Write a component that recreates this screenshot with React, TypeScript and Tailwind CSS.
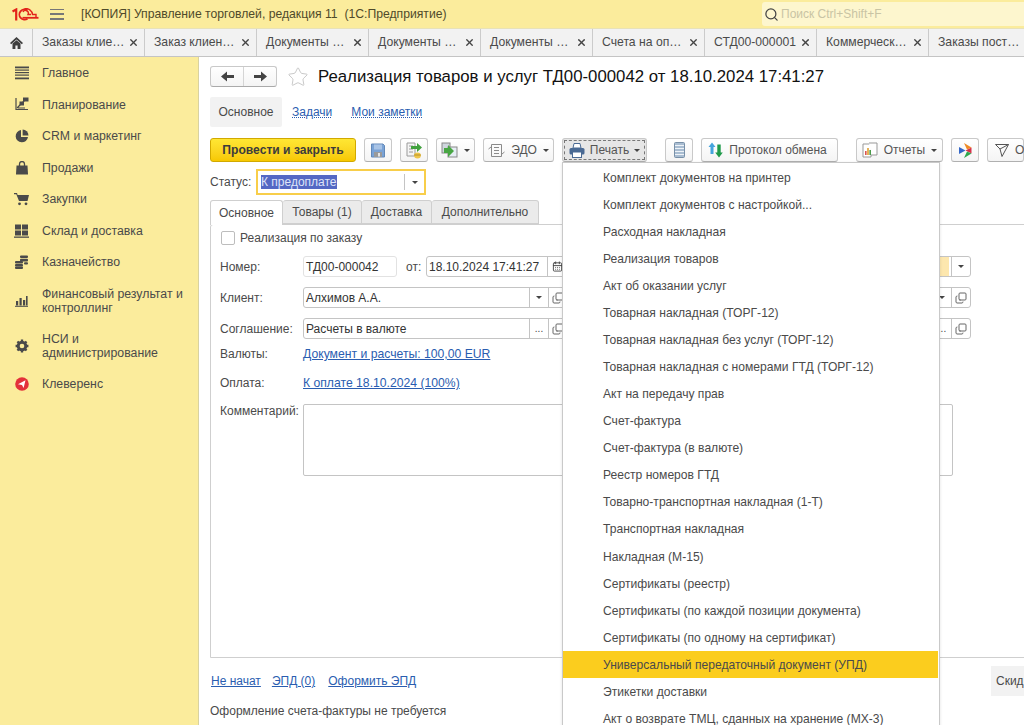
import { X, Search, Star, Copy, CalendarDays } from "lucide-react";
import type { ReactNode } from "react";

const tabs = [
  "Заказы клие…",
  "Заказ клиен…",
  "Документы …",
  "Документы …",
  "Документы …",
  "Счета на оп…",
  "СТД00-000001",
  "Коммерческ…",
  "Заказы пост…",
];

const printItems = [
  "Комплект документов на принтер",
  "Комплект документов с настройкой...",
  "Расходная накладная",
  "Реализация товаров",
  "Акт об оказании услуг",
  "Товарная накладная (ТОРГ-12)",
  "Товарная накладная без услуг (ТОРГ-12)",
  "Товарная накладная с номерами ГТД (ТОРГ-12)",
  "Акт на передачу прав",
  "Счет-фактура",
  "Счет-фактура (в валюте)",
  "Реестр номеров ГТД",
  "Товарно-транспортная накладная (1-Т)",
  "Транспортная накладная",
  "Накладная (М-15)",
  "Сертификаты (реестр)",
  "Сертификаты (по каждой позиции документа)",
  "Сертификаты (по одному на сертификат)",
  "Универсальный передаточный документ (УПД)",
  "Этикетки доставки",
  "Акт о возврате ТМЦ, сданных на хранение (МХ-3)",
];

function Logo() {
  return (
    <svg width="27" height="13" viewBox="0 0 27 13" fill="none" stroke="#e2231a">
      <path d="M0.5 3.5 L4.2 1.5 V12.5" strokeWidth="2.2" />
      <path d="M15.5 2.2 A5.2 5.2 0 1 0 15.5 10.8" strokeWidth="1.8" />
      <path d="M10.5 9.8 H26.5" strokeWidth="1.8" />
      <path d="M11 4 A2.5 2.5 0 0 1 16 6.5 H19 M12.5 0.8 A6.5 6.5 0 0 1 20.5 6.5 H24 V9" strokeWidth="1.4" />
    </svg>
  );
}

function HomeIcon() {
  return (
    <svg width="13" height="12" viewBox="0 0 13 12" fill="#3f3f3f">
      <path d="M6.5 0 L13 6 L11.8 7.2 L6.5 2.4 L1.2 7.2 L0 6 Z" />
      <path d="M2.5 6.6 L6.5 3.2 L10.5 6.6 V12 H7.6 V8.4 H5.4 V12 H2.5 Z" />
    </svg>
  );
}

function NavArrow({ flip }: { flip?: boolean }) {
  return (
    <svg width="13" height="11" viewBox="0 0 13 11" fill="#444" className={flip ? "scale-x-[-1]" : ""}>
      <path d="M0 5.5 L6 0.5 V4 H13 V7 H6 V10.5 Z" />
    </svg>
  );
}

function NavIcon({ name }: { name: string }) {
  const c = "#4a4a4a";
  if (name === "main")
    return (
      <svg width="14" height="14" viewBox="0 0 14 14" fill={c}>
        <rect y="0.5" width="14" height="1.8" />
        <rect y="3.5" width="14" height="1.2" />
        <rect y="6" width="14" height="1.2" />
        <rect y="8.5" width="14" height="1.2" />
        <rect y="11.5" width="14" height="1.8" />
      </svg>
    );
  if (name === "plan")
    return (
      <svg width="15" height="15" viewBox="0 0 15 15" fill="none" stroke={c}>
        <path d="M2 1 V12.5 H14" strokeWidth="1.2" />
        <path d="M3 11 L11 3 M4 11 H11" strokeWidth="1.2" />
        <rect x="9.5" y="1" width="4.5" height="3" fill={c} />
        <rect x="6" y="5" width="3.5" height="3" fill={c} />
      </svg>
    );
  if (name === "crm")
    return (
      <svg width="14" height="14" viewBox="0 0 14 14" fill={c}>
        <path d="M6 1 A6.2 6.2 0 1 0 13 8 H6 Z" />
        <path d="M7.6 0.5 A6 6 0 0 1 13.5 6.4 H7.6 Z" />
      </svg>
    );
  if (name === "sales")
    return (
      <svg width="14" height="14" viewBox="0 0 14 14">
        <path d="M1.5 4.5 H12.5 L13 13.5 H1 Z" fill={c} />
        <path d="M4.5 6 V3 A2.5 2.5 0 0 1 9.5 3 V6" fill="none" stroke={c} strokeWidth="1.3" />
      </svg>
    );
  if (name === "buy")
    return (
      <svg width="15" height="14" viewBox="0 0 15 14" fill={c}>
        <path d="M0 1 H3 L3.6 3 H15 L13.5 9 H5 L2.3 2.2 H0 Z" />
        <circle cx="5.5" cy="11.8" r="1.4" />
        <circle cx="12" cy="11.8" r="1.4" />
      </svg>
    );
  if (name === "stock")
    return (
      <svg width="15" height="14" viewBox="0 0 15 14" fill={c}>
        <rect x="1" y="0.5" width="6" height="5" />
        <rect x="8" y="0.5" width="6" height="5" />
        <rect x="1" y="6.5" width="6" height="5" />
        <rect x="8" y="6.5" width="6" height="5" />
        <rect y="12.5" width="15" height="1.3" />
      </svg>
    );
  if (name === "cash")
    return (
      <svg width="13" height="14" viewBox="0 0 13 14" fill={c}>
        <rect x="5" y="0.5" width="8" height="2.6" rx="1" />
        <rect x="5" y="3.8" width="8" height="2.6" rx="1" />
        <rect x="0" y="6" width="8" height="2.4" rx="1" />
        <rect x="0" y="9" width="8" height="2.4" rx="1" />
        <rect x="0" y="11.6" width="8" height="2.4" rx="1" />
        <rect x="9" y="7.2" width="4" height="2.4" rx="1" />
      </svg>
    );
  if (name === "fin")
    return (
      <svg width="13" height="12" viewBox="0 0 13 12" fill={c}>
        <rect x="1" y="6" width="2.2" height="4.5" />
        <rect x="4.5" y="3" width="2.2" height="7.5" />
        <rect x="8" y="5" width="2.2" height="5.5" />
        <rect x="11" y="1" width="1.6" height="9.5" />
        <rect y="10.8" width="13" height="1" />
      </svg>
    );
  if (name === "nsi")
    return (
      <svg width="14" height="14" viewBox="0 0 24 24" fill="none" stroke={c}>
        <circle cx="12" cy="12" r="6.5" strokeWidth="5" />
        <path
          d="M12 1 V5 M12 19 V23 M1 12 H5 M19 12 H23 M4.2 4.2 L7 7 M17 17 L19.8 19.8 M4.2 19.8 L7 17 M17 7 L19.8 4.2"
          strokeWidth="4"
        />
      </svg>
    );
  return (
    <svg width="14" height="14" viewBox="0 0 14 14">
      <circle cx="7" cy="7" r="6.8" fill="#e3313a" />
      <path d="M3 7.2 L10.5 3.2 L8.6 11 L7 8 Z" fill="#fff" />
    </svg>
  );
}

const sections = [
  { icon: "main", label: "Главное", h: "h-[32px]" },
  { icon: "plan", label: "Планирование", h: "h-[31px]" },
  { icon: "crm", label: "CRM и маркетинг", h: "h-[32px]" },
  { icon: "sales", label: "Продажи", h: "h-[31px]" },
  { icon: "buy", label: "Закупки", h: "h-[32px]" },
  { icon: "stock", label: "Склад и доставка", h: "h-[31px]" },
  { icon: "cash", label: "Казначейство", h: "h-[32px]" },
  { icon: "fin", label: "Финансовый результат и контроллинг", h: "h-[46px]" },
  { icon: "nsi", label: "НСИ и администрирование", h: "h-[44px]" },
  { icon: "klev", label: "Клеверенс", h: "h-[31px]" },
];

function Sidebar() {
  return (
    <aside className="w-[199px] shrink-0 border-r border-[#d9d2a0] bg-[#fbec9c]">
      {sections.map((s) => (
        <div key={s.label} className={`flex items-center ${s.h}`}>
          <span className="flex w-[42px] shrink-0 justify-center pl-[2px] pr-[1px]">
            <NavIcon name={s.icon} />
          </span>
          <span className="w-[150px] text-[12.3px] leading-[14px] text-[#4a4a4a]">{s.label}</span>
        </div>
      ))}
    </aside>
  );
}

function Btn({ w, children, className = "" }: { w: string; children: ReactNode; className?: string }) {
  return (
    <div
      className={`flex h-[24px] shrink-0 items-center justify-center gap-[6px] whitespace-nowrap rounded-[3px] border border-[#c9c9c9] border-b-[#b0b0b0] bg-gradient-to-b from-white to-[#f4f4f4] text-[12px] text-[#555] ${w} ${className}`}
    >
      {children}
    </div>
  );
}

function Caret() {
  return <span className="h-0 w-0 shrink-0 border-x-[3px] border-t-[3px] border-x-transparent border-t-[#444]" />;
}

function DocIcon({ kind }: { kind: string }) {
  if (kind === "save")
    return (
      <svg width="14" height="15" viewBox="0 0 14 15" className="shrink-0">
        <path d="M0.5 1 H12 L13.5 2.5 V14 H0.5 Z" fill="#7aa3d6" stroke="#6288b8" />
        <rect x="3" y="1.5" width="8" height="5" fill="#a9c4e6" />
        <rect x="3" y="9" width="8" height="5" fill="#9a9a9a" />
        <rect x="7" y="10" width="2" height="3.5" fill="#e4e4e4" />
      </svg>
    );
  if (kind === "post")
    return (
      <svg width="17" height="17" viewBox="0 0 17 17" className="shrink-0">
        <path d="M1 1 H9 V14 H1 Z" fill="#f5f5f5" stroke="#9a9a9a" />
        <path d="M3 4 H7 M3 7 H7 M3 10 H7" stroke="#9a9a9a" />
        <path d="M5 4 H11 V1 L16 5.5 L11 10 V7 H5 Z" fill="#41a13e" />
        <ellipse cx="11.5" cy="13.5" rx="3.4" ry="3" fill="#eec64b" />
        <path d="M8.2 13 H14.8" stroke="#b8922a" />
      </svg>
    );
  if (kind === "create")
    return (
      <svg width="17" height="16" viewBox="0 0 17 16" className="shrink-0">
        <rect x="1" y="1" width="8" height="10" fill="#cfd6de" stroke="#888" />
        <rect x="7" y="5" width="9" height="10" fill="#e6edf4" stroke="#888" />
        <path d="M3 6 H7 V3 L13 9 L7 15 V11 H3 Z" fill="#48a643" />
      </svg>
    );
  if (kind === "edo")
    return (
      <svg width="17" height="15" viewBox="0 0 17 15" fill="none" stroke="#8a8a8a" className="shrink-0">
        <path d="M3.5 1.5 H13.5 V13.5 H3.5 Z M6 4.5 H11 M6 7.5 H11 M6 10.5 H11" />
        <path d="M0.5 6 L3 4 M14 11 L16.5 9" />
      </svg>
    );
  if (kind === "print")
    return (
      <svg width="16" height="15" viewBox="0 0 16 15" className="shrink-0">
        <path d="M4 5 L5 0.5 H11 L12 5 Z" fill="#fff" stroke="#4a6a94" />
        <rect x="0.5" y="5" width="15" height="6.5" rx="1.5" fill="#4a6a94" />
        <rect x="3.5" y="9" width="9" height="5.5" fill="#fff" stroke="#4a6a94" />
      </svg>
    );
  if (kind === "list")
    return (
      <svg width="11" height="16" viewBox="0 0 11 16" className="shrink-0">
        <rect x="0.5" y="0.5" width="10" height="15" rx="1" fill="#a9bdd2" stroke="#7890a8" />
        <path d="M1 3.5 H10 M1 6.5 H10 M1 9.5 H10 M1 12.5 H10" stroke="#eef3f8" />
      </svg>
    );
  if (kind === "exchange")
    return (
      <svg width="15" height="16" viewBox="0 0 15 16" className="shrink-0">
        <path d="M4 0.5 L7.5 5 H5.5 V12 H2.5 V5 H0.5 Z" fill="#45a4dd" />
        <path d="M11 15.5 L14.8 10.5 H12.7 V2.5 H9.3 V10.5 H7.2 Z" fill="#1f9a4a" />
      </svg>
    );
  if (kind === "reports")
    return (
      <svg width="16" height="16" viewBox="0 0 16 16" className="shrink-0">
        <path d="M1 2 H9 V15 H1 Z" fill="#fff" stroke="#999" />
        <path d="M7 1 H15 V13 H9" fill="#fff" stroke="#999" />
        <rect x="3" y="9" width="1.6" height="4" fill="#d9534f" />
        <rect x="5.2" y="6" width="1.6" height="7" fill="#e0a030" />
        <rect x="7.4" y="8" width="1.6" height="5" fill="#4a9a4a" />
      </svg>
    );
  if (kind === "play")
    return (
      <svg width="13" height="15" viewBox="0 0 13 15" className="shrink-0">
        <path d="M5 0 L12.5 4.5 L8 6.5 Z" fill="#f08a24" />
        <path d="M0 4 L6.5 7.5 L0 11 Z" fill="#3467c8" />
        <path d="M6.5 7.5 L12.5 4.5 L12.5 10.5 Z" fill="#d6314a" />
        <path d="M5 15 L12.5 10.5 L8 8.5 Z" fill="#2fa84f" />
      </svg>
    );
  return (
    <svg width="14" height="13" viewBox="0 0 14 13" fill="none" stroke="#555" className="shrink-0">
      <path d="M0.5 0.5 H13.5 L7 12.5 L5 5 Z M5 5 L13.5 0.5" />
    </svg>
  );
}

function Toolbar() {
  return (
    <div className="mt-[11px] flex h-[24px] shrink-0">
      <div className="flex h-[24px] w-[146px] shrink-0 items-center justify-center rounded-[3px] border border-[#d1a900] bg-gradient-to-b from-[#ffe733] to-[#f7c800] text-[12.1px] font-bold text-[#3c3c3c]">
        Провести и закрыть
      </div>
      <Btn w="w-[28px] ml-[8px]"><DocIcon kind="save" /></Btn>
      <Btn w="w-[28px] ml-[8px]"><DocIcon kind="post" /></Btn>
      <Btn w="w-[39px] ml-[8px]"><DocIcon kind="create" /><Caret /></Btn>
      <Btn w="w-[71px] ml-[8px]"><DocIcon kind="edo" />ЭДО<Caret /></Btn>
      <Btn w="w-[85px] ml-[8px]" className="border-[#a8a8a8] bg-none bg-[#e6e6e6]">
        <span className="flex h-[20px] w-[81px] items-center justify-center gap-[5px] border border-dashed border-[#777]">
          <DocIcon kind="print" />Печать<Caret />
        </span>
      </Btn>
      <Btn w="w-[28px] ml-[18px]"><DocIcon kind="list" /></Btn>
      <Btn w="w-[137px] ml-[8px]" className="pr-[4px]"><DocIcon kind="exchange" />Протокол обмена</Btn>
      <Btn w="w-[87px] ml-[18px]"><DocIcon kind="reports" />Отчеты<Caret /></Btn>
      <Btn w="w-[28px] ml-[8px]"><DocIcon kind="play" /></Btn>
      <Btn w="w-[37px] ml-[8px]" className="justify-start pl-[7px]"><DocIcon kind="send" />О</Btn>
    </div>
  );
}

function Field({ w, children, right, className = "" }: { w: string; children: ReactNode; right?: ReactNode; className?: string }) {
  return (
    <div className={`flex h-[21px] shrink-0 rounded-[3px] border border-[#c4c4c4] bg-white text-[12px] text-[#333] ${w} ${className}`}>
      <span className="flex min-w-0 flex-1 items-center pl-[2px]">{children}</span>
      {right}
    </div>
  );
}

function Seg({ w = "w-[19px]", children }: { w?: string; children: ReactNode }) {
  return <span className={`flex shrink-0 items-center justify-center border-l border-[#c4c4c4] ${w}`}>{children}</span>;
}

function CopyIcon() {
  return <Copy size={12} color="#666" className="scale-y-[-1]" />;
}

function Row({ label, mt, children }: { label: string; mt: string; children: ReactNode }) {
  return (
    <div className={`flex items-center ${mt}`}>
      <span className="w-[92px] shrink-0 pl-[9px] text-[12px] text-[#4a4a4a]">{label}</span>
      {children}
    </div>
  );
}

function FormPanel() {
  return (
    <div className="flex h-[434px] w-[830px] shrink-0 flex-col rounded-tl-[3px] border border-[#cfcfcf] bg-white">
      <div className="mt-[4px] flex items-center pl-[10px] text-[12px] text-[#4a4a4a]">
        <span className="mr-[5px] h-[14px] w-[14px] rounded-[2px] border border-[#bdbdbd]" />
        Реализация по заказу
      </div>
      <Row label="Номер:" mt="mt-[9px]">
        <Field w="w-[94px]" className="border-[#e2e2e2]">ТД00-000042</Field>
        <span className="ml-[9px] w-[20px] text-[12px] text-[#4a4a4a]">от:</span>
        <Field w="w-[141px]" right={<Seg><CalendarDays size={11} strokeWidth={2} color="#444" /></Seg>}>
          18.10.2024 17:41:27
        </Field>
        <Field w="w-[130px] ml-[274px]" right={<Seg><Caret /></Seg>}>
          <span className="-ml-[2px] h-full w-full rounded-l-[3px] bg-[#fde7ae]" />
        </Field>
      </Row>
      <Row label="Клиент:" mt="mt-[10px]">
        <Field
          w="w-[265px]"
          right={
            <>
              <Seg><Caret /></Seg>
              <Seg><CopyIcon /></Seg>
            </>
          }
        >
          Алхимов А.А.
        </Field>
        <Field
          w="w-[150px] ml-[253px]"
          right={
            <>
              <Seg><Caret /></Seg>
              <Seg><CopyIcon /></Seg>
            </>
          }
        >
          {" "}
        </Field>
      </Row>
      <Row label="Соглашение:" mt="mt-[10px]">
        <Field
          w="w-[265px]"
          right={
            <>
              <Seg><span className="text-[10px] leading-none text-[#444]">...</span></Seg>
              <Seg><CopyIcon /></Seg>
            </>
          }
        >
          Расчеты в валюте
        </Field>
        <Field
          w="w-[150px] ml-[253px]"
          right={
            <>
              <Seg><span className="text-[10px] leading-none text-[#444]">...</span></Seg>
              <Seg><CopyIcon /></Seg>
            </>
          }
        >
          {" "}
        </Field>
      </Row>
      <Row label="Валюты:" mt="mt-[6px]">
        <a className="text-[12.2px] text-[#2a5db0] underline">Документ и расчеты: 100,00 EUR</a>
      </Row>
      <Row label="Оплата:" mt="mt-[11px]">
        <a className="text-[12.2px] text-[#2a5db0] underline">К оплате 18.10.2024 (100%)</a>
      </Row>
      <div className="mt-[11px] flex items-start">
        <span className="w-[92px] shrink-0 pl-[9px] text-[12px] leading-[14px] text-[#4a4a4a]">Комментарий:</span>
        <div className="h-[72px] w-[650px] rounded-[2px] border border-[#c4c4c4]" />
      </div>
    </div>
  );
}

function PrintMenu() {
  return (
    <div className="absolute left-[562px] top-[162px] h-[570px] w-[378px] border border-[#c9c9c9] bg-white pt-[1.4px] shadow-[0_1px_3px_rgba(0,0,0,0.12)]">
      {printItems.map((item) => (
        <div
          key={item}
          className={`flex h-[27.05px] items-center pl-[40px] text-[12.1px] text-[#4a4a4a] ${
            item.startsWith("Универсальный") ? "mr-[1px] bg-[#fbcd1e] text-[#3d3a20]" : ""
          }`}
        >
          {item}
        </div>
      ))}
    </div>
  );
}

export default function App() {
  return (
    <div className="relative flex h-[725px] w-[1024px] flex-col overflow-hidden bg-white font-['Liberation_Sans',Arial,sans-serif]">
      <header className="flex h-[28px] shrink-0 items-center bg-[#fbec9c]">
        <span className="ml-[12px] flex w-[27px]"><Logo /></span>
        <span className="ml-[11px] flex h-[11px] w-[14px] flex-col justify-between">
          <i className="h-[1.5px] bg-[#777]" />
          <i className="h-[1.5px] bg-[#777]" />
          <i className="h-[1.5px] bg-[#777]" />
        </span>
        <span className="ml-[17px] text-[12.2px] text-[#4f4a2a]">[КОПИЯ] Управление торговлей, редакция 11&nbsp; (1С:Предприятие)</span>
        <div className="ml-auto flex h-[24px] w-[262px] items-center rounded-l-[3px] bg-[#fdf6ce] pl-[2px] text-[12px] text-[#c9c4a4]">
          <Search size={15} color="#444" className="mr-[2px]" />
          Поиск Ctrl+Shift+F
        </div>
      </header>
      <nav className="flex h-[29px] shrink-0 border-t border-b border-t-[#e8e2b8] border-b-[#c4c4c4] bg-[#f2f2f2]">
        <span className="flex w-[33px] shrink-0 items-center justify-center border-r border-[#cbcbcb]">
          <HomeIcon />
        </span>
        {tabs.map((t, i) => (
          <div key={i} className="flex w-[112px] shrink-0 items-center whitespace-nowrap border-r border-[#cbcbcb] pl-[9px] pr-[5px] text-[12.2px] text-[#4a4a4a]">
            <span className="min-w-0 flex-1">{t}</span>
            {i < 8 && <X size={11} strokeWidth={3} color="#444" className="shrink-0" />}
          </div>
        ))}
      </nav>
      <div className="flex min-h-0 flex-1">
        <Sidebar />
        <main className="flex min-w-0 flex-1 flex-col overflow-hidden pl-[11px]">
          <div className="mt-[9px] flex h-[21px] shrink-0 items-center">
            <div className="flex h-[21px] w-[67px] rounded-[3px] border border-[#c9c9c9] border-b-[#aaa] bg-gradient-to-b from-white to-[#f4f4f4]">
              <span className="flex flex-1 items-center justify-center border-r border-[#d5d5d5]">
                <NavArrow />
              </span>
              <span className="flex flex-1 items-center justify-center">
                <NavArrow flip />
              </span>
            </div>
            <Star size={22} strokeWidth={1} color="#c4c4c4" className="ml-[10px]" />
            <h1 className="ml-[9px] text-[16.8px] text-[#111]">Реализация товаров и услуг ТД00-000042 от 18.10.2024 17:41:27</h1>
          </div>
          <div className="mt-[10px] flex h-[30px] shrink-0 items-center text-[12px]">
            <span className="flex h-full w-[72px] items-center justify-center rounded-[2px] bg-[#f2f2f2] text-[#4a4a4a]">Основное</span>
            <a className="ml-[10px] text-[#2a5db0] underline decoration-dotted">Задачи</a>
            <a className="ml-[19px] text-[#2a5db0] underline decoration-dotted">Мои заметки</a>
          </div>
          <Toolbar />
          <div className="mt-[7px] flex h-[26px] shrink-0 items-center">
            <span className="w-[46px] text-[12px] text-[#4a4a4a]">Статус:</span>
            <div className="flex h-[26px] w-[170px] items-center border-2 border-[#f8ce4a] pl-[3px] text-[12px]">
              <span className="flex-1"><span className="bg-[#5468c4] text-[#dfe4f8]">К предоплате</span></span>
              <span className="flex h-[16px] w-[20px] items-center justify-center border-l border-[#c4c4c4]"><Caret /></span>
            </div>
          </div>
          <div className="mt-[5px] flex h-[24px] shrink-0 text-[12px] text-[#4a4a4a]">
            <span className="relative z-10 -mb-[1px] flex w-[73px] items-center justify-center rounded-t-[3px] border border-b-0 border-[#cfcfcf] bg-white">Основное</span>
            <span className="flex w-[79px] items-center justify-center rounded-t-[3px] border-y border-r border-[#cfcfcf] bg-[#ebebeb]">Товары (1)</span>
            <span className="flex w-[70px] items-center justify-center rounded-t-[3px] border-y border-r border-[#cfcfcf] bg-[#ebebeb]">Доставка</span>
            <span className="flex w-[107px] items-center justify-center rounded-t-[3px] border-y border-r border-[#cfcfcf] bg-[#ebebeb]">Дополнительно</span>
          </div>
          <FormPanel />
          <div className="mt-[8px] flex h-[30px] shrink-0 items-center text-[12px] text-[#2a5db0]">
            <a className="ml-[1px] underline">Не начат</a>
            <a className="ml-[11px] underline">ЭПД (0)</a>
            <a className="ml-[13px] underline">Оформить ЭПД</a>
            <span className="ml-auto flex h-[30px] w-[33px] items-center whitespace-nowrap bg-[#f2f2f2] pl-[5px] text-[#4a4a4a]">Скид</span>
          </div>
          <div className="mt-[6px] text-[12px] text-[#4a4a4a]">Оформление счета-фактуры не требуется</div>
        </main>
      </div>
      <PrintMenu />
    </div>
  );
}
